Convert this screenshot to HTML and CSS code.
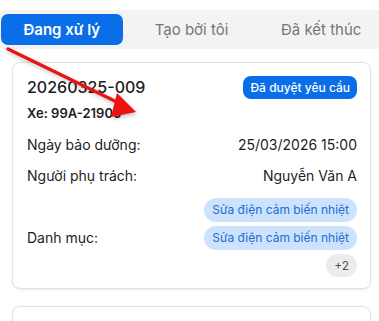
FILE: index.html
```html
<!DOCTYPE html>
<html lang="vi">
<head>
    <meta charset="UTF-8">
    <meta name="viewport" content="width=device-width, initial-scale=1.0">
    <title>Bảo dưỡng</title>
    <link rel="stylesheet" href="styles.css">
</head>
<body>

<div class="tabs">
    <div class="tab active">Đang xử lý</div>
    <div class="tab">Tạo bởi tôi</div>
    <div class="tab">Đã kết thúc</div>
</div>

<div class="list">
    <div class="card">
        <div class="card-head">
            <div>
                <div class="code">20260325-009</div>
                <div class="plate">Xe: 99A-21900</div>
            </div>
            <span class="status">Đã duyệt yêu cầu</span>
        </div>
        <div class="row">
            <span>Ngày bảo dưỡng:</span>
            <span>25/03/2026 15:00</span>
        </div>
        <div class="row">
            <span>Người phụ trách:</span>
            <span>Nguyễn Văn A</span>
        </div>
        <div class="row cat-row">
            <span>Danh mục:</span>
            <div class="chips">
                <span class="chip">Sửa điện cảm biến nhiệt</span>
                <span class="chip">Sửa điện cảm biến nhiệt</span>
                <span class="chip more">+2</span>
            </div>
        </div>
    </div>
    <div class="card"></div>
</div>

<!-- mũi tên chú thích -->
<svg class="arrow" width="379" height="321" viewBox="0 0 379 321">
    <line x1="8" y1="49" x2="121" y2="104" stroke="#ee1111" stroke-width="3.2" stroke-linecap="round"/>
    <polygon points="136,112 117,93 111,117" fill="#ee1111"/>
</svg>

</body>
</html>
```

FILE: styles.css
```css
body {
    font-family: Inter, 'Noto Sans', sans-serif;
    background-color: #fff;
    margin: 0;
    padding: 0;
    color: #1d1d1f;
    overflow: hidden;
    position: relative;
}
.tabs {
    display: flex;
    gap: 8px;
    margin: 10px 0 0 -3px;
    width: 381px;
    padding: 4px;
    background-color: #f3f3f4;
    border-radius: 8px;
}
.tab {
    flex: 1;
    height: 31px;
    line-height: 31px;
    text-align: center;
    font-size: 15px;
    color: #76767a;
    border-radius: 7px;
}
.tab.active {
    background-color: #0a6ee8;
    color: #fff;
    font-weight: 600;
}
.list {
    padding: 13px 8px 0 12px;
}
.card {
    background-color: #fff;
    border: 1px solid #e2e2e2;
    border-radius: 8px;
    box-shadow: 0 1px 3px rgba(0, 0, 0, 0.08);
    padding: 12px 13px 11px 14px;
    margin-bottom: 17px;
    min-height: 40px;
}
.card-head {
    display: flex;
    justify-content: space-between;
    align-items: flex-start;
}
.code {
    font-size: 16px;
    font-weight: 500;
    line-height: 24px;
}
.plate {
    font-size: 13px;
    font-weight: 600;
    line-height: 20px;
    margin-top: 4px;
}
.status {
    margin-top: 1px;
    background-color: #0a6ee8;
    color: #fff;
    font-size: 12px;
    font-weight: 500;
    padding: 0 7px;
    height: 23px;
    line-height: 23px;
    border-radius: 8px;
}
.row {
    display: flex;
    justify-content: space-between;
    align-items: center;
    font-size: 14px;
    line-height: 20px;
    margin-top: 12px;
}
.row:nth-child(3) {
    margin-top: 11px;
}
.chips {
    display: flex;
    flex-direction: column;
    align-items: flex-end;
    gap: 4px;
}
.chip {
    background-color: #cde2fd;
    color: #1a6ed6;
    font-size: 12px;
    height: 24px;
    line-height: 24px;
    padding: 0 8px;
    border-radius: 12px;
}
.chip.more {
    background-color: #ececec;
    color: #555;
    height: 23px;
    line-height: 23px;
    padding: 0 8px;
}
.arrow {
    position: absolute;
    left: 0;
    top: 0;
    filter: drop-shadow(1px 2px 2px rgba(0, 0, 0, 0.25));
}
```
